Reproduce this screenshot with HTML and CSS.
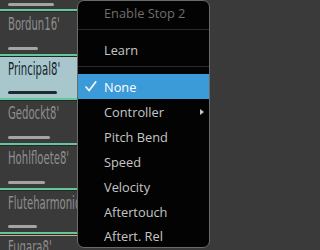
FILE: index.html
```html
<!DOCTYPE html>
<html>
<head>
<meta charset="utf-8">
<link rel="stylesheet" href="styles.css">
</head>
<body>
<div class="stops">
  <div class="lead"><div class="bar" style="width:46px"></div></div>
  <div class="stop"><div class="name"><span>Bordun16'</span></div><div class="bar" style="width:30px"></div></div>
  <div class="stop on"><div class="name"><span>Principal8'</span></div><div class="bar" style="width:49px"></div></div>
  <div class="stop"><div class="name"><span>Gedockt8'</span></div><div class="bar" style="width:42px"></div></div>
  <div class="stop"><div class="name"><span>Hohlfloete8'</span></div><div class="bar" style="width:37px"></div></div>
  <div class="stop"><div class="name"><span>Fluteharmonique8'</span></div><div class="bar" style="width:29px"></div></div>
  <div class="stop alt"><div class="name"><span>Fugara8'</span></div><div class="bar" style="width:40px"></div></div>
</div>
<div class="menu">
  <div class="item disabled"><span class="chk"></span><span class="lbl">Enable Stop 2</span></div>
  <div class="sep"></div>
  <div class="item"><span class="chk"></span><span class="lbl">Learn</span></div>
  <div class="sep"></div>
  <div class="item active"><span class="chk"><svg width="12" height="11" viewBox="0 0 12 11"><path d="M1 6 L4.2 9.6 L10.8 0.8" fill="none" stroke="#fff" stroke-width="1.6" stroke-linecap="round" stroke-linejoin="round"/></svg></span><span class="lbl">None</span></div>
  <div class="item"><span class="chk"></span><span class="lbl">Controller</span><span class="arrow"></span></div>
  <div class="item"><span class="chk"></span><span class="lbl">Pitch Bend</span></div>
  <div class="item"><span class="chk"></span><span class="lbl">Speed</span></div>
  <div class="item"><span class="chk"></span><span class="lbl">Velocity</span></div>
  <div class="item"><span class="chk"></span><span class="lbl">Aftertouch</span></div>
  <div class="item"><span class="chk"></span><span class="lbl">Aftert. Rel</span></div>
</div>
</body>
</html>
```
FILE: styles.css
```css
html, body {
  margin: 0;
  padding: 0;
}
body {
  width: 210px;
  height: 250px;
  overflow: hidden;
  background: #3a3a3a;
  position: relative;
  font-family: "Open Sans", "Noto Sans", sans-serif;
}
.stops {
  display: flex;
  flex-direction: column;
}
.lead {
  height: 9px;
  padding: 3px 0 0 8px;
  box-sizing: border-box;
}
.stop {
  height: 44.7px;
  box-sizing: border-box;
  border-top: 2px solid #62c79b;
  box-shadow: inset 0 1px 0 #272727;
  padding-left: 8px;
  display: flex;
  flex-direction: column;
  overflow: hidden;
}
.stop.on {
  background: #a7c7cd;
}
.stop.alt {
  box-shadow: inset 0 1px 0 #272727, inset 0 2px 0 #c8b189;
}
.name {
  padding-top: 2px;
  height: 20px;
  white-space: nowrap;
}
.name span {
  display: inline-block;
  font-family: "DejaVu Sans", sans-serif;
  font-stretch: condensed;
  font-size: 17px;
  line-height: 20px;
  color: #8e8e8e;
  transform: scaleX(0.66);
  transform-origin: 0 0;
}
.stop.on .name span {
  color: #16242a;
}
.bar {
  margin-top: auto;
  margin-bottom: 4px;
  height: 3px;
  border-radius: 2px;
  background: #a4a4a4;
}
.lead .bar {
  margin: 0;
}
.stop.on .bar {
  background: #1e2a2e;
}
.menu {
  position: absolute;
  left: 77px;
  top: 0;
  width: 133px;
  box-sizing: border-box;
  background: #030303;
  border: 1px solid #6a6a6a;
  border-radius: 7px;
  display: flex;
  flex-direction: column;
  overflow: hidden;
}
.item {
  height: 25px;
  display: grid;
  grid-template-columns: 26px 1fr auto;
  align-items: center;
  padding-right: 5px;
  font-size: 12.8px;
  color: #c6c6c6;
}
.item:first-child {
  height: 24px;
}
.item:last-child {
  height: 23px;
}
.item.disabled {
  color: #6e6e6e;
}
.item.active {
  background: #3b9ad8;
  color: #ffffff;
}
.chk {
  display: flex;
  align-items: center;
  padding-left: 7px;
}
.lbl {
  white-space: nowrap;
}
.arrow {
  width: 0;
  height: 0;
  border-left: 4px solid #c6c6c6;
  border-top: 3.5px solid transparent;
  border-bottom: 3.5px solid transparent;
}
.sep {
  height: 1px;
  background: #2c2c2c;
  margin: 4px 0 7px;
}
```
